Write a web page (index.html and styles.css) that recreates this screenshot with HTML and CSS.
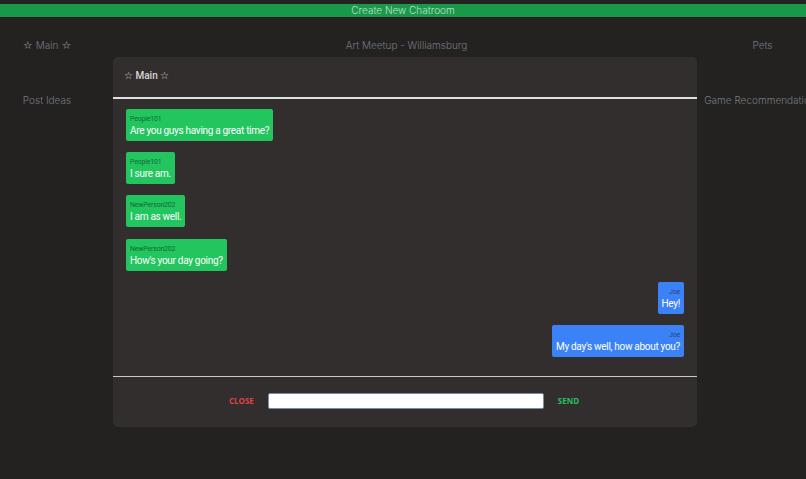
FILE: index.html
```html
<!DOCTYPE html>
<html lang="en">
<head>
    <meta charset="UTF-8">
    <meta name="viewport" content="width=device-width, initial-scale=1.0">
    <title>Chatrooms</title>
    <link rel="stylesheet" href="styles.css">
</head>
<body>
    <button class="create-room">Create New Chatroom</button>

    <div class="rooms">
        <div class="room">☆ Main ☆</div>
        <div class="room">Art Meetup - Williamsburg</div>
        <div class="room">Pets</div>
        <div class="room">Post Ideas</div>
        <div class="room"></div>
        <div class="room">Game Recommendations</div>
    </div>

    <div class="modal">
        <div class="modal-header">☆ Main ☆</div>

        <div class="messages">
            <div class="message them">
                <div class="author">People101</div>
                <div class="text">Are you guys having a great time?</div>
            </div>
            <div class="message them">
                <div class="author">People101</div>
                <div class="text">I sure am.</div>
            </div>
            <div class="message them">
                <div class="author">NewPerson202</div>
                <div class="text">I am as well.</div>
            </div>
            <div class="message them">
                <div class="author">NewPerson202</div>
                <div class="text">How's your day going?</div>
            </div>
            <div class="message me">
                <div class="author">Joe</div>
                <div class="text">Hey!</div>
            </div>
            <div class="message me">
                <div class="author">Joe</div>
                <div class="text">My day's well, how about you?</div>
            </div>
        </div>

        <div class="modal-footer">
            <button class="close">CLOSE</button>
            <input class="chat-input" type="text">
            <button class="send">SEND</button>
        </div>
    </div>
</body>
</html>
```

FILE: styles.css
```css
html, body {
    height: 100%;
}
body {
    margin: 0;
    padding-top: 4px;
    box-sizing: border-box;
    overflow: hidden;
    background-color: #232221;
    font-family: Roboto, sans-serif;
}
.create-room {
    display: block;
    width: 100%;
    height: 13px;
    padding: 0;
    border: none;
    background-color: #1a9849;
    color: #bfe0cb;
    font-family: Inter, sans-serif;
    font-size: 10px;
    font-weight: 300;
    line-height: 13px;
}
.rooms {
    display: grid;
    grid-template-columns: 94px 1fr 87px;
    grid-auto-rows: 55px;
    margin-top: 21px;
    color: #777980;
    font-family: Inter, sans-serif;
    font-size: 10px;
    font-weight: 300;
}
.room {
    display: flex;
    justify-content: center;
    line-height: 14px;
    white-space: nowrap;
}
.modal {
    position: fixed;
    top: 57px;
    left: 113px;
    width: 584px;
    height: 370px;
    display: flex;
    flex-direction: column;
    background-color: #322e2d;
    border-radius: 5px;
    color: #fff;
}
.modal-header {
    height: 40px;
    padding: 0 11px;
    border-bottom: 2px solid #e0e0e0;
    font-size: 10px;
    font-weight: 500;
    line-height: 37px;
    color: #d9d9d9;
}
.messages {
    flex: 1;
    display: flex;
    flex-direction: column;
    align-items: flex-start;
    gap: 11.2px;
    padding: 10px 13px;
}
.message {
    box-sizing: border-box;
    height: 32px;
    padding: 6px 4px 0;
    border-radius: 2px;
}
.them {
    background-color: #22c55e;
}
.me {
    align-self: flex-end;
    background-color: #3b82f6;
    text-align: right;
}
.author {
    font-size: 7px;
    line-height: 9px;
    letter-spacing: -0.2px;
}
.them .author {
    color: #136b3a;
}
.me .author {
    color: #23437f;
}
.text {
    font-size: 10px;
    line-height: 14px;
    letter-spacing: -0.3px;
    white-space: nowrap;
}
.modal-footer {
    box-sizing: border-box;
    height: 51px;
    padding: 0 2px 3px 0;
    display: flex;
    align-items: center;
    justify-content: center;
    gap: 14px;
    border-top: 1px solid #c9c7c7;
}
.close, .send {
    padding: 0;
    border: none;
    background: none;
    font-family: "Open Sans", sans-serif;
    font-size: 8px;
    font-weight: 700;
}
.close {
    color: #dc4349;
}
.send {
    color: #27c060;
}
.chat-input {
    box-sizing: border-box;
    width: 276px;
    height: 16px;
    padding: 0;
    background-color: #fff;
    border: 1px solid #7d8aa5;
    border-radius: 2px;
}
```
